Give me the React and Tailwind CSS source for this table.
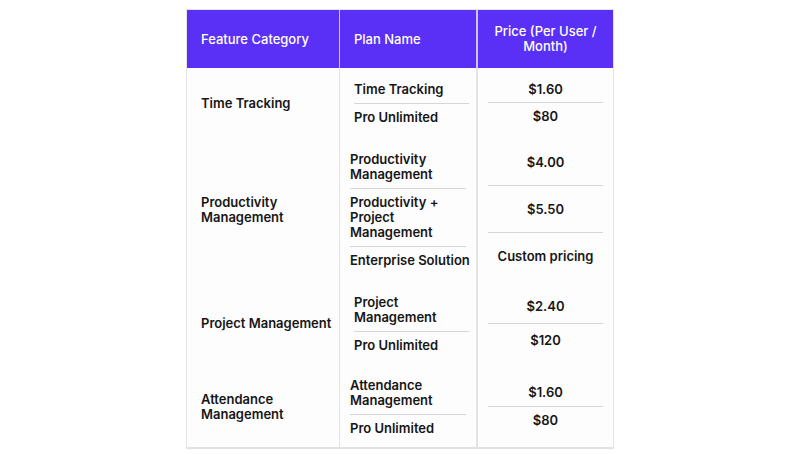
const groups = [
  {
    category: "Time Tracking",
    height: "h-[70px]",
    planPad: "pl-[14px] pr-[7px]",
    plans: ["Time Tracking", "Pro Unlimited"],
    priceHeight: "h-[27px]",
    prices: ["$1.60", "$80"],
  },
  {
    category: "Productivity\nManagement",
    height: "h-[143px]",
    planPad: "pl-[10px] pr-[10px]",
    plans: ["Productivity\nManagement", "Productivity +\nProject\nManagement", "Enterprise Solution"],
    priceHeight: "h-[47px]",
    prices: ["$4.00", "$5.50", "Custom pricing"],
  },
  {
    category: "Project Management",
    height: "h-[85px]",
    planPad: "pl-[14px] pr-[7px]",
    plans: ["Project\nManagement", "Pro Unlimited"],
    priceHeight: "h-[33px]",
    prices: ["$2.40", "$120"],
  },
  {
    category: "Attendance\nManagement",
    height: "h-[81px]",
    planPad: "pl-[10px] pr-[10px]",
    plans: ["Attendance\nManagement", "Pro Unlimited"],
    priceHeight: "h-[27px]",
    prices: ["$1.60", "$80"],
  },
];

export default function App() {
  return (
    <div className="min-h-[454px] w-full bg-white pt-[9px] font-['Inter','Noto_Sans',sans-serif] text-[13px] font-semibold leading-[15px] text-[#161616]">
      <div className="mx-auto w-[428px] border border-[#e4e4e4] border-b-2 border-b-[#e2e2e2] bg-[#fdfdfd]">
        <div className="flex h-[58px] bg-[#5b30f6] font-medium text-white">
          <div className="flex w-[152px] items-center pl-[14px]">Feature Category</div>
          <div className="flex w-[137px] items-center border-l border-[#cfc2ff] pl-[14px]">Plan Name</div>
          <div className="flex flex-1 items-center justify-center border-l-2 border-[#cfc2ff] px-[12px] text-center">
            Price (Per User / Month)
          </div>
        </div>

        {groups.map((group) => (
          <div key={group.category} className={`flex ${group.height}`}>
            <div className="flex w-[152px] items-center whitespace-pre-line pl-[14px]">{group.category}</div>
            <div className={`flex w-[137px] flex-col justify-center border-l border-[#e4e4e4] ${group.planPad}`}>
              {group.plans.map((plan, i) => (
                <div
                  key={plan}
                  className={`whitespace-pre py-[6px] ${i < group.plans.length - 1 ? "border-b border-[#d6d6d6]" : ""}`}
                >
                  {plan}
                </div>
              ))}
            </div>
            <div className="flex flex-1 flex-col justify-center border-l-2 border-[#e4e4e4] px-[10px]">
              {group.prices.map((price, i) => (
                <div
                  key={price + i}
                  className={`flex items-center justify-center ${group.priceHeight} ${i < group.prices.length - 1 ? "border-b border-[#d6d6d6]" : ""}`}
                >
                  {price}
                </div>
              ))}
            </div>
          </div>
        ))}
      </div>
    </div>
  );
}
